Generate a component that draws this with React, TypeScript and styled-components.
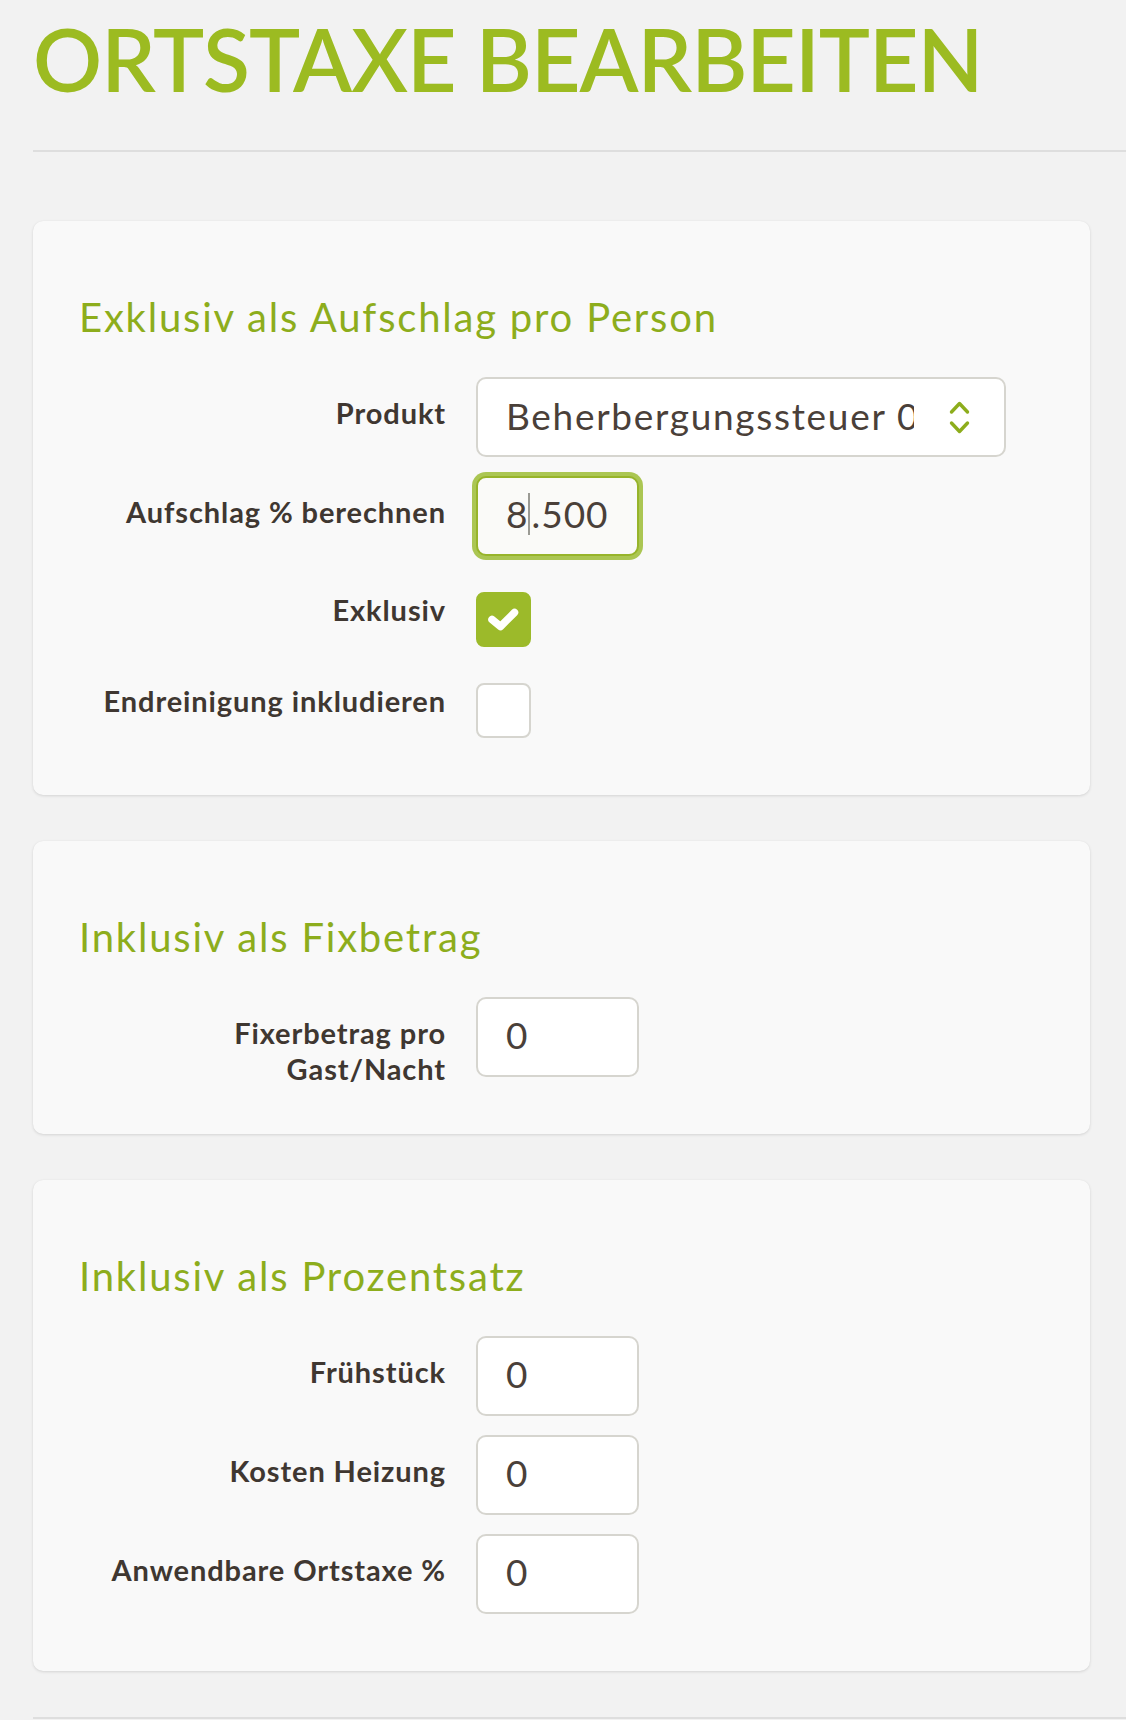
import React from 'react';
import styled, { createGlobalStyle } from 'styled-components';

const Green = '#9cbb21';
const HeadGreen = '#8dad1c';
const Ink = '#3f3731';
const FieldInk = '#4a4039';
const Line = '#d6d5cf';

const GlobalStyle = createGlobalStyle`
  html, body {
    margin: 0;
    padding: 0;
    background: #f2f2f2;
  }
  body {
    font-family: Lato, 'Open Sans', sans-serif;
  }
`;

const Field = ({
  label,
  check = false,
  children,
}: {
  label: React.ReactNode;
  check?: boolean;
  children: React.ReactNode;
}) => (
  <Row $check={check}>
    <Label $check={check}>{label}</Label>
    <div>{children}</div>
  </Row>
);

const ChevronsIcon = () => (
  <svg width="21" height="35" viewBox="0 0 21 35" fill="none">
    <path d="M2.5 12 L10.5 3.5 L18.5 12" stroke={HeadGreen} strokeWidth="3.4" strokeLinecap="round" strokeLinejoin="round" />
    <path d="M2.5 23 L10.5 31.5 L18.5 23" stroke={HeadGreen} strokeWidth="3.4" strokeLinecap="round" strokeLinejoin="round" />
  </svg>
);

const CheckIcon = () => (
  <svg width="55" height="55" viewBox="0 0 55 55" fill="none">
    <path d="M16 27.5 L24.5 34.5 L38.5 20.5" stroke="#ffffff" strokeWidth="7.5" strokeLinecap="round" strokeLinejoin="round" />
  </svg>
);

export default function App() {
  return (
    <Page>
      <GlobalStyle />
      <Title>ORTSTAXE BEARBEITEN</Title>
      <Rule />

      <Card $first>
        <CardTitle>Exklusiv als Aufschlag pro Person</CardTitle>
        <Field label="Produkt">
          <SelectBox>
            <SelectValue>Beherbergungssteuer 0%</SelectValue>
            <ChevronsIcon />
          </SelectBox>
        </Field>
        <Field label="Aufschlag % berechnen">
          <TextBox $focused>
            8<Caret />.500
          </TextBox>
        </Field>
        <Field label="Exklusiv" check>
          <CheckBox $checked>
            <CheckIcon />
          </CheckBox>
        </Field>
        <Field label="Endreinigung inkludieren" check>
          <CheckBox />
        </Field>
      </Card>

      <Card>
        <CardTitle>Inklusiv als Fixbetrag</CardTitle>
        <Field label="Fixerbetrag pro Gast/Nacht">
          <TextBox>0</TextBox>
        </Field>
      </Card>

      <Card>
        <CardTitle>Inklusiv als Prozentsatz</CardTitle>
        <Field label="Frühstück">
          <TextBox>0</TextBox>
        </Field>
        <Field label="Kosten Heizung">
          <TextBox>0</TextBox>
        </Field>
        <Field label="Anwendbare Ortstaxe %">
          <TextBox>0</TextBox>
        </Field>
      </Card>

      <Rule />
    </Page>
  );
}

const Page = styled.div`
  padding: 7px 0 0 33px;
  min-height: 1720px;
  box-sizing: border-box;
  overflow: hidden;
`;

const Title = styled.h1`
  margin: 0;
  font-family: Lato, sans-serif;
  font-size: 86px;
  font-weight: 600;
  line-height: 1.2;
  letter-spacing: -1px;
  color: ${Green};
`;

const Rule = styled.div`
  margin-top: 40px;
  height: 2px;
  background: #dedede;
`;

const Card = styled.section<{ $first?: boolean }>`
  margin: ${(p) => (p.$first ? '69px' : '0')} 36px 46px 0;
  padding: 72px 46px 57px;
  background: #f9f9f9;
  border-radius: 10px;
  box-shadow: 0 1px 3px rgba(0, 0, 0, 0.12), 0 0 1px rgba(0, 0, 0, 0.06);
`;

const CardTitle = styled.h2`
  margin: 0 0 36px;
  font-family: Lato, sans-serif;
  font-size: 40px;
  font-weight: 400;
  line-height: 1.2;
  letter-spacing: 1.8px;
  color: ${HeadGreen};
`;

const Row = styled.div<{ $check: boolean }>`
  display: grid;
  grid-template-columns: 367px auto;
  column-gap: 30px;
  align-items: start;
  margin-top: ${(p) => (p.$check ? '36px' : '19px')};

  &:nth-of-type(1) {
    margin-top: 0;
  }
`;

const Label = styled.label<{ $check: boolean }>`
  padding-top: ${(p) => (p.$check ? '0' : '18px')};
  margin-bottom: -10px;
  text-align: right;
  font-family: Lato, sans-serif;
  font-size: 29px;
  font-weight: 700;
  line-height: 36px;
  letter-spacing: 0.9px;
  color: ${Ink};
`;

const SelectBox = styled.div`
  display: flex;
  align-items: center;
  width: 530px;
  height: 80px;
  box-sizing: border-box;
  padding: 0 34px 4px 28px;
  border: 2px solid ${Line};
  border-radius: 10px;
  background: #ffffff;

  svg {
    flex-shrink: 0;
    margin-left: 35px;
    margin-top: 4px;
  }
`;

const SelectValue = styled.span`
  flex: 1;
  overflow: hidden;
  white-space: nowrap;
  font-family: Lato, sans-serif;
  font-size: 37px;
  letter-spacing: 1.7px;
  color: ${FieldInk};
`;

const TextBox = styled.div<{ $focused?: boolean }>`
  display: flex;
  align-items: center;
  width: 163px;
  height: 80px;
  box-sizing: border-box;
  padding: 0 0 5px 28px;
  border: 2px solid ${(p) => (p.$focused ? '#97b42a' : Line)};
  border-radius: 10px;
  background: ${(p) => (p.$focused ? '#fafaf8' : '#ffffff')};
  box-shadow: ${(p) => (p.$focused ? '0 0 0 4px #abc653' : 'none')};
  font-family: Lato, sans-serif;
  font-size: 37px;
  letter-spacing: 1px;
  color: ${FieldInk};
`;

const Caret = styled.span`
  display: inline-block;
  width: 2px;
  height: 42px;
  margin: 0 1px 0 0;
  background: #9a9a94;
`;

const CheckBox = styled.div<{ $checked?: boolean }>`
  width: 55px;
  height: 55px;
  box-sizing: border-box;
  border-radius: 8px;
  border: 2px solid ${(p) => (p.$checked ? '#9cba2a' : Line)};
  background: ${(p) => (p.$checked ? '#9cba2a' : '#ffffff')};

  svg {
    display: block;
    margin: -2px;
  }
`;
